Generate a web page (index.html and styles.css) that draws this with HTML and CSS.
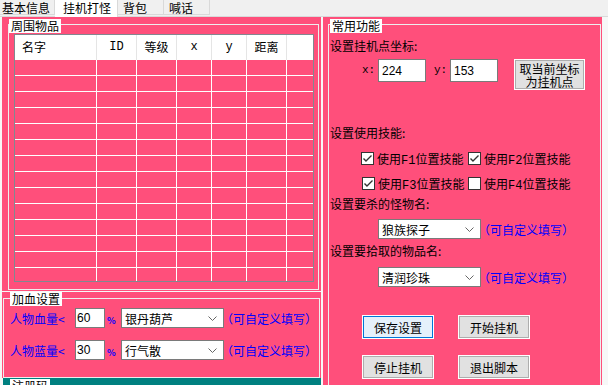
FILE: index.html
```html
<!DOCTYPE html>
<html lang="zh-CN">
<head>
    <meta charset="UTF-8">
    <title>挂机打怪</title>
    <link rel="stylesheet" href="styles.css">
</head>
<body>
    <div class="tabs">
        <span class="tab first">基本信息</span>
        <span class="tab on">挂机打怪</span>
        <span class="tab">背包</span>
        <span class="tab">喊话</span>
    </div>

    <div class="page">
        <div class="left">
            <section class="panel items">
                <span class="cap">周围物品</span>
                <div class="group">
                    <div class="list">
                        <div class="head">
                            <span class="name">名字</span>
                            <span class="lat">ID</span>
                            <span>等级</span>
                            <span class="lat">x</span>
                            <span class="lat">y</span>
                            <span>距离</span>
                            <span></span>
                        </div>
                        <div class="row"><span></span><span></span><span></span><span></span><span></span><span></span><span></span></div>
                        <div class="row"><span></span><span></span><span></span><span></span><span></span><span></span><span></span></div>
                        <div class="row"><span></span><span></span><span></span><span></span><span></span><span></span><span></span></div>
                        <div class="row"><span></span><span></span><span></span><span></span><span></span><span></span><span></span></div>
                        <div class="row"><span></span><span></span><span></span><span></span><span></span><span></span><span></span></div>
                        <div class="row"><span></span><span></span><span></span><span></span><span></span><span></span><span></span></div>
                        <div class="row"><span></span><span></span><span></span><span></span><span></span><span></span><span></span></div>
                        <div class="row"><span></span><span></span><span></span><span></span><span></span><span></span><span></span></div>
                        <div class="row"><span></span><span></span><span></span><span></span><span></span><span></span><span></span></div>
                        <div class="row"><span></span><span></span><span></span><span></span><span></span><span></span><span></span></div>
                        <div class="row"><span></span><span></span><span></span><span></span><span></span><span></span><span></span></div>
                        <div class="row"><span></span><span></span><span></span><span></span><span></span><span></span><span></span></div>
                        <div class="row"><span></span><span></span><span></span><span></span><span></span><span></span><span></span></div>
                        <div class="row"><span></span><span></span><span></span><span></span><span></span><span></span><span></span></div>
                    </div>
                </div>
            </section>

            <section class="panel heal">
                <span class="cap">加血设置</span>
                <div class="group">
                    <div class="hrow">
                        <span class="lab">人物血量&lt;</span>
                        <input class="num" type="text" value="60">
                        <span class="pct">%</span>
                        <div class="select"><span>银丹葫芦</span><svg width="9" height="5" viewBox="0 0 9 5"><polyline points="0.5,0.5 4.5,4.5 8.5,0.5" fill="none" stroke="#666" stroke-width="1"/></svg></div>
                        <span class="hint">（可自定义填写）</span>
                    </div>
                    <div class="hrow">
                        <span class="lab">人物蓝量&lt;</span>
                        <input class="num" type="text" value="30">
                        <span class="pct">%</span>
                        <div class="select"><span>行气散</span><svg width="9" height="5" viewBox="0 0 9 5"><polyline points="0.5,0.5 4.5,4.5 8.5,0.5" fill="none" stroke="#666" stroke-width="1"/></svg></div>
                        <span class="hint">（可自定义填写）</span>
                    </div>
                </div>
            </section>

            <section class="panel reg">
                <span class="cap">注册码</span>
            </section>
        </div>

        <section class="panel common">
            <span class="cap">常用功能</span>
            <div class="group">
                <div class="line t1">设置挂机点坐标:</div>
                <div class="coords">
                    <span class="lat">x:</span>
                    <input class="pos" type="text" value="224">
                    <span class="lat ylab">y:</span>
                    <input class="pos" type="text" value="153">
                    <button class="btn take"><span>取当前坐标</span><span>为挂机点</span></button>
                </div>

                <div class="line t2">设置使用技能:</div>
                <div class="chk-row">
                    <label class="chk"><span class="box"><svg width="11" height="11" viewBox="0 0 11 11"><polyline points="1.5,5.5 4,8 9.5,2.5" fill="none" stroke="#333" stroke-width="1.4"/></svg></span>使用F1位置技能</label>
                    <label class="chk"><span class="box"><svg width="11" height="11" viewBox="0 0 11 11"><polyline points="1.5,5.5 4,8 9.5,2.5" fill="none" stroke="#333" stroke-width="1.4"/></svg></span>使用F2位置技能</label>
                </div>
                <div class="chk-row r2">
                    <label class="chk"><span class="box"><svg width="11" height="11" viewBox="0 0 11 11"><polyline points="1.5,5.5 4,8 9.5,2.5" fill="none" stroke="#333" stroke-width="1.4"/></svg></span>使用F3位置技能</label>
                    <label class="chk"><span class="box"></span>使用F4位置技能</label>
                </div>

                <div class="line t3">设置要杀的怪物名:</div>
                <div class="srow">
                    <div class="select"><span>狼族探子</span><svg width="9" height="5" viewBox="0 0 9 5"><polyline points="0.5,0.5 4.5,4.5 8.5,0.5" fill="none" stroke="#666" stroke-width="1"/></svg></div>
                    <span class="hint">（可自定义填写）</span>
                </div>

                <div class="line t4">设置要拾取的物品名:</div>
                <div class="srow s2">
                    <div class="select"><span>清润珍珠</span><svg width="9" height="5" viewBox="0 0 9 5"><polyline points="0.5,0.5 4.5,4.5 8.5,0.5" fill="none" stroke="#666" stroke-width="1"/></svg></div>
                    <span class="hint">（可自定义填写）</span>
                </div>

                <div class="brow">
                    <button class="btn focus">保存设置</button>
                    <button class="btn">开始挂机</button>
                </div>
                <div class="brow b2">
                    <button class="btn">停止挂机</button>
                    <button class="btn">退出脚本</button>
                </div>
            </div>
        </section>
    </div>
</body>
</html>
```

FILE: styles.css
```css
body {
    margin: 0;
    width: 608px;
    height: 385px;
    overflow: hidden;
    background: #f0f0f0;
    font-family: "Noto Sans CJK SC", sans-serif;
    font-size: 12px;
    color: #000;
}

.lat {
    font-family: "Liberation Mono", "Noto Sans CJK SC", monospace;
}

/* tab strip */
.tabs {
    display: flex;
    align-items: flex-start;
    height: 16px;
}

.tab {
    box-sizing: border-box;
    height: 15px;
    width: 46px;
    padding: 1px 0 0 5px;
    line-height: 13px;
    border: 1px solid #d9d9d9;
    border-top: none;
    border-left: none;
    background: #f0f0f0;
}

.tab.first {
    width: 55px;
    padding-left: 2px;
}

.tab.on {
    width: 63px;
    height: 17px;
    padding: 1px 0 0 8px;
    line-height: 13px;
    background: #fff;
    border-bottom: none;
    position: relative;
    z-index: 1;
}

/* tab page */
.page {
    display: flex;
    height: 368px;
    padding-left: 2px;
    border-top: 1px solid #d9d9d9;
    background: #f7f7f7;
}

.left {
    width: 319px;
    display: flex;
    flex-direction: column;
}

.panel {
    position: relative;
    background: #ff4f7b;
}

.group {
    box-sizing: border-box;
    border: 1px solid #eeeeee;
}

.cap {
    position: absolute;
    top: 2px;
    left: 7px;
    height: 14px;
    line-height: 14px;
    padding: 0 2px;
    background: #fff;
}

/* 周围物品 */
.items {
    height: 274px;
    margin-bottom: 1px;
}

.items .group {
    height: 266px;
    margin: 7px 2px 0 6px;
}

.list {
    box-sizing: border-box;
    width: 300px;
    height: 248px;
    margin: 9px 0 0 5px;
    border: 1px solid #828790;
    overflow: hidden;
}

.head,
.row {
    display: grid;
    grid-template-columns: 82px 40px 40px 35px 35px 40px 26px;
}

.head {
    height: 25px;
    line-height: 24px;
    background: #fff;
    text-align: center;
}

.head span {
    border-right: 1px solid #e5e5e5;
}

.head span:last-child {
    border-right: none;
}

.head .name {
    text-align: left;
    padding-left: 7px;
}

.row {
    box-sizing: border-box;
    height: 16px;
    border-bottom: 1px solid #fff;
}

.row span {
    border-right: 1px solid #fff;
}

.row span:last-child {
    border-right: none;
}

/* 加血设置 */
.heal {
    height: 86px;
}

.heal .cap {
    top: 0;
    left: 8px;
}

.heal .group {
    height: 80px;
    margin: 6px 1px 0 1px;
    padding: 9px 0 0 6px;
}

.hrow {
    display: flex;
    align-items: center;
    height: 20px;
    margin-bottom: 12px;
}

.lab {
    width: 65px;
    color: #0000ff;
}

.num,
.pos {
    box-sizing: border-box;
    height: 20px;
    width: 30px;
    margin: 0;
    padding: 0 0 0 1px;
    border: 1px solid #7a7a7a;
    background: #fff;
    font-family: "Liberation Sans", sans-serif;
    font-size: 12px;
    color: #000;
    outline: none;
}

.pct {
    width: 16px;
    padding: 4px 0 0 2px;
    box-sizing: border-box;
    font-size: 9px;
    font-weight: bold;
    color: #0000ff;
}

.select {
    box-sizing: border-box;
    display: flex;
    align-items: center;
    justify-content: space-between;
    width: 103px;
    height: 20px;
    padding: 0 6px 0 3px;
    border: 1px solid #7a7a7a;
    background: #fff;
}

.hint {
    margin-left: -3px;
    color: #0000ff;
}

/* 注册码 */
.reg {
    flex: 1;
    background: #008080;
    margin-left: 1px;
}

.reg .cap {
    top: 1px;
}

/* 常用功能 */
.common {
    width: 279px;
    height: 368px;
    margin-left: 2px;
}

.common .group {
    height: 370px;
    margin: 7px 1px 0 5px;
    padding: 14px 0 0 1px;
}

.line {
    height: 14px;
    line-height: 14px;
}

.coords {
    display: flex;
    align-items: flex-start;
    height: 31px;
    margin: 6px 0 0 32px;
}

.coords .lat {
    width: 16px;
    line-height: 23px;
    font-size: 11px;
}

.coords .ylab {
    margin-left: 8px;
}

.pos {
    width: 48px;
    height: 23px;
    padding-left: 3px;
}

.btn {
    box-sizing: border-box;
    width: 72px;
    height: 24px;
    margin: 0;
    padding: 0;
    border: 1px solid #fff;
    box-shadow: inset 0 0 0 1px #adadad;
    background: #e1e1e1;
    font-family: "Noto Sans CJK SC", sans-serif;
    font-size: 12px;
    color: #000;
}

.btn.take {
    display: flex;
    flex-direction: column;
    align-items: center;
    justify-content: center;
    width: 71px;
    height: 31px;
    margin-left: 16px;
    line-height: 13px;
}

.btn.take span {
    height: 13px;
}

.btn.focus {
    background: #e5f1fb;
    box-shadow: inset 0 0 0 1px #0078d7;
}

.t2 {
    margin-top: 36px;
}

.chk-row {
    display: flex;
    align-items: center;
    height: 13px;
    margin: 12px 0 0 31px;
    font-family: "Liberation Mono", "Noto Sans CJK SC", monospace;
}

.chk-row.r2 {
    margin-left: 32px;
}

.chk {
    display: flex;
    align-items: center;
    width: 107px;
}

.r2 .chk {
    width: 106px;
}

.box {
    box-sizing: border-box;
    display: flex;
    align-items: center;
    justify-content: center;
    width: 13px;
    height: 13px;
    margin-right: 3px;
    border: 1px solid #333;
    background: #fff;
}

.t3 {
    margin-top: 7px;
}

.srow {
    display: flex;
    align-items: center;
    height: 20px;
    margin: 8px 0 0 48px;
}

.t4 {
    margin-top: 5px;
}

.srow.s2 {
    margin-top: 9px;
}

.brow {
    display: flex;
    gap: 24px;
    margin: 28px 0 0 32px;
}

.brow.b2 {
    margin-top: 16px;
}
```
